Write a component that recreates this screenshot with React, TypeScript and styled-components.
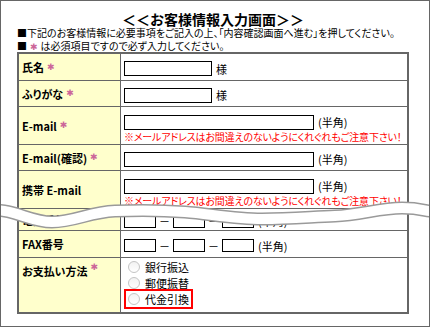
import React from 'react';
import styled, { createGlobalStyle } from 'styled-components';

const GlobalStyle = createGlobalStyle`
  html, body {
    margin: 0;
    padding: 0;
    background: #fff;
  }
  body {
    font-family: "Noto Sans CJK JP", "DejaVu Sans", sans-serif;
    color: #000;
  }
`;

const Frame = styled.div`
  position: relative;
  width: 430px;
  height: 327px;
  box-sizing: border-box;
  border: 1px solid #666;
  padding-left: 16px;
  overflow: hidden;
`;

const Title = styled.h1`
  margin: 0;
  padding-top: 11px;
  width: 392px;
  text-align: center;
  font-size: 14px;
  line-height: 14px;
  font-weight: bold;
`;

const Notice = styled.p`
  margin: 0;
  height: 13px;
  font-size: 10px;
  line-height: 13px;
  font-feature-settings: "palt";
  white-space: nowrap;
`;

const Star = styled.span`
  color: #cc6699;
  font-family: "DejaVu Sans", sans-serif;
  font-size: 9px;
  line-height: 1;
  margin: 0 3px;
`;

const FormTable = styled.div`
  display: grid;
  grid-template-columns: 101px 286px;
  grid-template-rows: 26px 25px 37px 25px 37px 21px 26px 54px;
  gap: 1px;
  width: 392px;
  box-sizing: border-box;
  border: 2px solid #666;
  background: #666;
`;

const Label = styled.div<{ $top?: boolean }>`
  display: flex;
  align-items: ${(p) => (p.$top ? 'flex-start' : 'center')};
  padding: ${(p) => (p.$top ? '5px 0 0 3px' : '0 0 0 3px')};
  background: #ffffcc;
  font-size: 11px;
  font-weight: bold;
  font-feature-settings: "palt";
  white-space: nowrap;
`;

const Value = styled.div<{ $pad?: number }>`
  display: flex;
  flex-direction: column;
  justify-content: ${(p) => (p.$pad !== undefined ? 'flex-start' : 'center')};
  padding: ${(p) => (p.$pad !== undefined ? `${p.$pad}px 0 0 3px` : '3px 0 0 3px')};
  background: #fff;
  font-size: 11px;
  font-feature-settings: "palt";
`;

const Field = styled.div`
  display: flex;
  align-items: center;
  gap: 4px;
  white-space: nowrap;
`;

const TextBox = styled.input<{ $w: number }>`
  width: ${(p) => p.$w}px;
  height: 15px;
  box-sizing: border-box;
  margin: 0;
  padding: 0;
  border: 1px solid #000;
  background: #fff;
`;

const SmallBox = styled(TextBox)`
  height: 13px;
`;

const Dash = styled.span`
  margin: 0 -1px;
`;

const Note = styled.div`
  margin-top: 1px;
  color: #ff0000;
  font-size: 10px;
  line-height: 12px;
  letter-spacing: -0.17px;
  white-space: nowrap;
`;

const Options = styled.div`
  display: flex;
  flex-direction: column;
  gap: 4px;
  padding: 3px 0 0 4px;
`;

const Option = styled.label<{ $marked?: boolean }>`
  display: flex;
  align-items: center;
  gap: 5px;
  width: 61px;
  height: 12px;
  outline: ${(p) => (p.$marked ? '2px solid #ff0000' : 'none')};
  outline-offset: 2px;
  font-size: 11px;
  white-space: nowrap;
`;

const Radio = styled.input`
  appearance: none;
  width: 12px;
  height: 12px;
  margin: 0;
  border: 1px solid #c4c4c4;
  border-radius: 50%;
  background: linear-gradient(#f2f2f2, #ffffff);
`;

const Wave = styled.svg`
  position: absolute;
  left: -1px;
  top: -1px;
  pointer-events: none;
`;

const wavePath =
  'M -10 210 C 15 209, 30 222, 52 222 S 90 212, 115 211 S 160 210, 185 212 S 235 219, 262 219 S 310 217, 335 216 S 380 208, 402 208 S 425 212, 440 212';

export default function App() {
  return (
    <>
      <GlobalStyle />
      <Frame>
        <Title>＜＜お客様情報入力画面＞＞</Title>
        <Notice>■下記のお客様情報に必要事項をご記入の上、「内容確認画面へ進む」を押してください。</Notice>
        <Notice>
          ■<Star>✱</Star>は必須項目ですので必ず入力してください。
        </Notice>
        <FormTable>
          <Label>
            氏名<Star>✱</Star>
          </Label>
          <Value>
            <Field>
              <TextBox $w={88} />様
            </Field>
          </Value>

          <Label>
            ふりがな<Star>✱</Star>
          </Label>
          <Value>
            <Field>
              <TextBox $w={88} />様
            </Field>
          </Value>

          <Label>
            E-mail<Star>✱</Star>
          </Label>
          <Value $pad={7}>
            <Field>
              <TextBox $w={190} />(半角)
            </Field>
            <Note>※メールアドレスはお間違えのないようにくれぐれもご注意下さい！</Note>
          </Value>

          <Label>
            E-mail(確認)<Star>✱</Star>
          </Label>
          <Value>
            <Field>
              <TextBox $w={190} />(半角)
            </Field>
          </Value>

          <Label>携帯 E-mail</Label>
          <Value $pad={7}>
            <Field>
              <TextBox $w={190} />(半角)
            </Field>
            <Note>※メールアドレスはお間違えのないようにくれぐれもご注意下さい！</Note>
          </Value>

          <Label>
            電話番号<Star>✱</Star>
          </Label>
          <Value>
            <Field>
              <SmallBox $w={32} />
              <Dash>－</Dash>
              <SmallBox $w={32} />
              <Dash>－</Dash>
              <SmallBox $w={32} />(半角)
            </Field>
          </Value>

          <Label>FAX番号</Label>
          <Value>
            <Field>
              <SmallBox $w={32} />
              <Dash>－</Dash>
              <SmallBox $w={32} />
              <Dash>－</Dash>
              <SmallBox $w={32} />(半角)
            </Field>
          </Value>

          <Label $top>
            お支払い方法<Star>✱</Star>
          </Label>
          <Value $pad={0}>
            <Options>
              <Option>
                <Radio type="radio" name="pay" />
                銀行振込
              </Option>
              <Option>
                <Radio type="radio" name="pay" />
                郵便振替
              </Option>
              <Option $marked>
                <Radio type="radio" name="pay" />
                代金引換
              </Option>
            </Options>
          </Value>
        </FormTable>
        <Wave width="430" height="327" viewBox="0 0 430 327">
          <path d={wavePath} fill="none" stroke="#9a9a9a" strokeWidth="13" />
          <path d={wavePath} fill="none" stroke="#ffffff" strokeWidth="10" />
        </Wave>
      </Frame>
    </>
  );
}
